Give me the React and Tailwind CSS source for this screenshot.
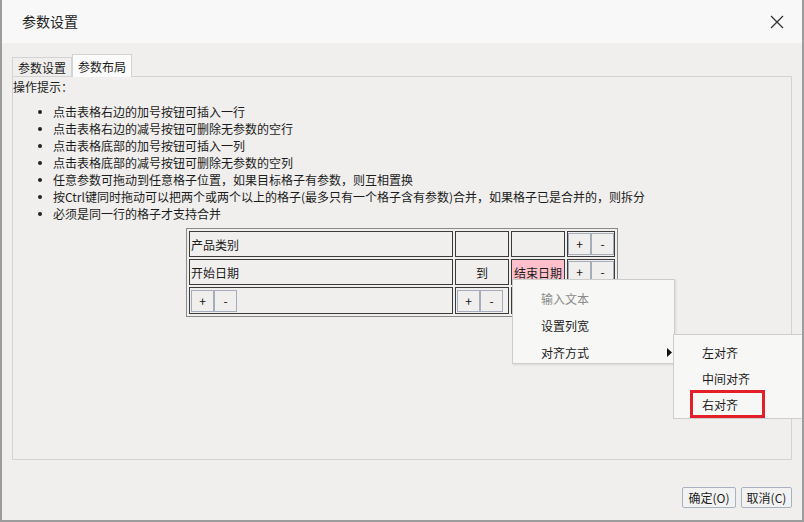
import React from 'react';

const tips = [
    '点击表格右边的加号按钮可插入一行',
    '点击表格右边的减号按钮可删除无参数的空行',
    '点击表格底部的加号按钮可插入一列',
    '点击表格底部的减号按钮可删除无参数的空列',
    '任意参数可拖动到任意格子位置，如果目标格子有参数，则互相置换',
    '按Ctrl键同时拖动可以把两个或两个以上的格子(最多只有一个格子含有参数)合并，如果格子已是合并的，则拆分',
    '必须是同一行的格子才支持合并',
];

// 加减按钮组
function PlusMinus() {
    return (
        <div className="flex">
            <button className="w-[23px] h-[22px] border border-[#a3adbb] bg-[#f0efed] text-[12px] leading-none text-[#111]">+</button>
            <button className="w-[23px] h-[22px] border border-[#a3adbb] bg-[#f0efed] text-[12px] leading-none text-[#111]">-</button>
        </div>
    );
}

const cell = 'border border-[#3c3c3c] p-0 h-[26px] align-middle';

export default function App() {
    return (
        <div className="relative w-[804px] h-[522px] overflow-hidden bg-[#f0efed] border-l-2 border-r-2 border-b-2 border-[#9c9c9c] flex flex-col text-[12px] leading-[17px] text-[#1b1b1b] font-['Noto_Sans_CJK_SC','Noto_Sans',sans-serif]">
            {/* 标题栏 */}
            <div className="h-[43px] shrink-0 bg-[#f8f8f8] flex items-center justify-between pl-[20px] pr-[18px]">
                <span className="text-[14px] text-[#222]">参数设置</span>
                <svg width="14" height="14" viewBox="0 0 14 14" className="mt-[1px]">
                    <path d="M1 1 L13 13 M13 1 L1 13" stroke="#333" strokeWidth="1.3" />
                </svg>
            </div>

            {/* 标签页 */}
            <div className="px-[10px] mt-[11px] flex items-end h-[22px] relative z-10">
                <div className="h-[19px] px-[5px] border border-b-0 border-[#d3d3d3] bg-[#f0efed] flex items-center">参数设置</div>
                <div className="h-[23px] px-[5px] border border-b-0 border-[#d3d3d3] bg-[#fbfbfb] flex items-center -mb-[1px]">参数布局</div>
            </div>

            {/* 面板 */}
            <div className="mx-[10px] h-[384px] border border-[#d3d3d3] flex flex-col">
                <div className="pt-[1px]">操作提示：</div>
                <ul className="mt-[8px] flex flex-col">
                    {tips.map((t, i) => (
                        <li key={i} className="flex items-center h-[17px] whitespace-nowrap">
                            <span className="ml-[25px] w-[4px] h-[4px] rounded-full bg-[#222] shrink-0"></span>
                            <span className="ml-[11px]">{t}</span>
                        </li>
                    ))}
                </ul>

                {/* 布局表格 */}
                <table className="mx-auto mt-[6px] border-separate border-spacing-[2px] border border-[#8a8a8a]">
                    <tbody>
                        <tr>
                            <td className={`${cell} w-[264px] pl-[1px]`}>产品类别</td>
                            <td className={`${cell} w-[54px]`}></td>
                            <td className={`${cell} w-[54px]`}></td>
                            <td className={`${cell} w-[48px]`}><PlusMinus /></td>
                        </tr>
                        <tr>
                            <td className={`${cell} pl-[1px]`}>开始日期</td>
                            <td className={`${cell} text-center`}>到</td>
                            <td className={`${cell} bg-[#ffc0cb] text-center`}>结束日期</td>
                            <td className={cell}><PlusMinus /></td>
                        </tr>
                        <tr>
                            <td className={`${cell} pl-[1px] h-[27px]`}><PlusMinus /></td>
                            <td className={`${cell} pl-[1px]`}><PlusMinus /></td>
                            <td className={cell}></td>
                            <td className={cell}></td>
                        </tr>
                    </tbody>
                </table>
            </div>

            {/* 底部按钮 */}
            <div className="flex justify-end gap-[5px] pr-[10px] mt-[27px]">
                <button className="w-[54px] h-[21px] border border-[#a8b2c0] rounded-[2px] bg-[#f2f2f2] text-[12px] leading-none">确定(O)</button>
                <button className="w-[51px] h-[21px] border border-[#a8b2c0] rounded-[2px] bg-[#f2f2f2] text-[12px] leading-none">取消(C)</button>
            </div>

            {/* 右键菜单 */}
            <div className="absolute left-[510px] top-[279px] w-[163px] h-[85px] bg-[#f7f7f5] border border-[#cdcdcd] shadow-[1px_1px_2px_rgba(0,0,0,0.1)] pt-[5px]">
                <div className="h-[27px] flex items-center pl-[28px] text-[#8a8a8a]">输入文本</div>
                <div className="h-[27px] flex items-center pl-[28px]">设置列宽</div>
                <div className="h-[27px] flex items-center pl-[28px] justify-between pr-[2px]">
                    <span>对齐方式</span>
                    <svg width="5" height="9" viewBox="0 0 5 9"><path d="M0 0 L5 4.5 L0 9 Z" fill="#111" /></svg>
                </div>
            </div>

            {/* 子菜单 */}
            <div className="absolute left-[671px] top-[334px] w-[140px] h-[85px] bg-[#f7f7f5] border border-[#cdcdcd] pt-[4px]">
                <div className="h-[26px] flex items-center pl-[28px]">左对齐</div>
                <div className="h-[26px] flex items-center pl-[28px]">中间对齐</div>
                <div className="h-[27px] flex items-center pl-[28px]">右对齐</div>
            </div>

            {/* 红框标注 */}
            <div className="absolute left-[688px] top-[390px] w-[75px] h-[28px] border-[3px] border-[#e3202a]"></div>
        </div>
    );
}
